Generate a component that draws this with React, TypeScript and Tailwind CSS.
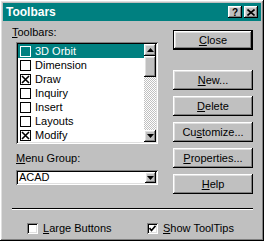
import React from 'react';

const raised = "shadow-[inset_-1px_-1px_#000,inset_1px_1px_#fff,inset_-2px_-2px_#808080,inset_2px_2px_#dfdfdf]";
const sunken = "shadow-[inset_1px_1px_#808080,inset_-1px_-1px_#fff,inset_2px_2px_#000,inset_-2px_-2px_#dfdfdf]";

const items = [
  { name: '3D Orbit', checked: false, selected: true },
  { name: 'Dimension', checked: false },
  { name: 'Draw', checked: true },
  { name: 'Inquiry', checked: false },
  { name: 'Insert', checked: false },
  { name: 'Layouts', checked: false },
  { name: 'Modify', checked: true },
];

const XMark = () => (
  <svg width="9" height="9" viewBox="0 0 9 9" className="block">
    <path d="M1 1 L8 8 M8 1 L1 8" stroke="#000" strokeWidth="1.6" />
  </svg>
);

const ListBox = ({ selected, checked }: { selected?: boolean; checked: boolean }) => (
  <div
    className={
      "w-[11px] h-[11px] flex items-center justify-center border " +
      (selected ? "bg-[#008080] border-white" : "bg-white border-black")
    }
  >
    {checked && <XMark />}
  </div>
);

const Arrow = ({ up }: { up?: boolean }) => (
  <svg width="7" height="4" viewBox="0 0 7 4" className="block">
    <path d={up ? "M3.5 0 L7 4 L0 4 Z" : "M0 0 L7 0 L3.5 4 Z"} fill="#000" />
  </svg>
);

const Btn = ({ children, def }: { children: React.ReactNode; def?: boolean }) => (
  <div
    className={
      "w-[80px] h-[20px] bg-[#c0c0c0] flex items-center justify-center text-black " +
      (def ? "border border-black " : "") +
      raised
    }
  >
    {children}
  </div>
);

const Win95Check = ({ checked }: { checked: boolean }) => (
  <div className={"w-[11px] h-[11px] bg-white flex items-center justify-center " + sunken}>
    {checked && (
      <svg width="7" height="7" viewBox="0 0 7 7" className="block">
        <path d="M0.5 3 L2.5 5.5 L6.5 0.8" stroke="#000" strokeWidth="1.6" fill="none" />
      </svg>
    )}
  </div>
);

export default function App() {
  return (
    <div
      className={
        "w-[264px] h-[241px] bg-[#c0c0c0] p-[3px] flex flex-col text-[11px] leading-[11px] text-black " +
        raised
      }
      style={{ fontFamily: '"Liberation Sans", Arial, sans-serif' }}
    >
      {/* title bar */}
      <div className="h-[18px] bg-[#008080] flex items-center justify-between pl-[3px] pr-[3px]">
        <span className="text-white font-bold text-[12px]">Toolbars</span>
        <div className="flex gap-[2px]">
          <div className={"w-[14px] h-[12px] bg-[#c0c0c0] flex items-center justify-center font-bold text-[10px] " + raised}>?</div>
          <div className={"w-[14px] h-[12px] bg-[#c0c0c0] flex items-center justify-center " + raised}>
            <svg width="8" height="7" viewBox="0 0 8 7" className="block">
              <path d="M0.5 0.5 L7.5 6.5 M7.5 0.5 L0.5 6.5" stroke="#000" strokeWidth="1.6" />
            </svg>
          </div>
        </div>
      </div>

      {/* body */}
      <div className="flex flex-col pl-[9px] pr-[8px]">
        <div className="flex gap-[15px] h-[173px]">
          {/* left */}
          <div className="w-[146px] flex flex-col">
            <div className="mt-[6px] h-[11px]">
              <span className="underline">T</span>oolbars:
            </div>
            <div className={"ml-[4px] mt-[4px] w-[142px] h-[102px] bg-white p-[2px] flex " + sunken}>
              <div className="flex-1 flex flex-col">
                {items.map((it) => (
                  <div
                    key={it.name}
                    className={
                      "h-[14px] flex items-center gap-[4px] pl-[2px] " +
                      (it.selected ? "bg-[#008080] text-white" : "")
                    }
                  >
                    <ListBox selected={it.selected} checked={it.checked} />
                    <span>{it.name}</span>
                  </div>
                ))}
              </div>
              {/* scrollbar */}
              <div className="w-[12px] flex flex-col bg-[repeating-conic-gradient(#fff_0_25%,#c0c0c0_0_50%)] bg-[length:2px_2px]">
                <div className={"h-[12px] bg-[#c0c0c0] flex items-center justify-center " + raised}>
                  <Arrow up />
                </div>
                <div className={"h-[21px] bg-[#c0c0c0] " + raised} />
                <div className="flex-1" />
                <div className={"h-[12px] bg-[#c0c0c0] flex items-center justify-center " + raised}>
                  <Arrow />
                </div>
              </div>
            </div>
            <div className="ml-[4px] mt-[9px] h-[11px]">
              <span className="underline">M</span>enu Group:
            </div>
            <div className={"ml-[4px] mt-[6px] w-[142px] h-[15px] bg-white p-[2px] flex items-center " + sunken}>
              <span className="flex-1 pl-[1px]">ACAD</span>
              <div className={"w-[11px] h-[11px] bg-[#c0c0c0] flex items-center justify-center " + raised}>
                <Arrow />
              </div>
            </div>
          </div>

          {/* right */}
          <div className="w-[80px] flex flex-col">
            <div className="mt-[9px]">
              <Btn def>
                <span className="underline">C</span>lose
              </Btn>
            </div>
            <div className="mt-[20px] flex flex-col gap-[6px]">
              <Btn>
                <span className="underline">N</span>ew...
              </Btn>
              <Btn>
                <span className="underline">D</span>elete
              </Btn>
              <Btn>
                Cu<span className="underline">s</span>tomize...
              </Btn>
              <Btn>
                <span className="underline">P</span>roperties...
              </Btn>
              <Btn>
                <span className="underline">H</span>elp
              </Btn>
            </div>
          </div>
        </div>

        {/* separator */}
        <div className="mt-[14px] h-[2px] border-t border-t-[#000] border-b border-b-white" />

        {/* bottom checkboxes */}
        <div className="mt-[13px] flex items-center">
          <div className="ml-[15px] flex items-center gap-[5px] w-[120px]">
            <Win95Check checked={false} />
            <span>
              <span className="underline">L</span>arge Buttons
            </span>
          </div>
          <div className="flex items-center gap-[5px]">
            <Win95Check checked />
            <span>
              <span className="underline">S</span>how ToolTips
            </span>
          </div>
        </div>
      </div>
    </div>
  );
}
